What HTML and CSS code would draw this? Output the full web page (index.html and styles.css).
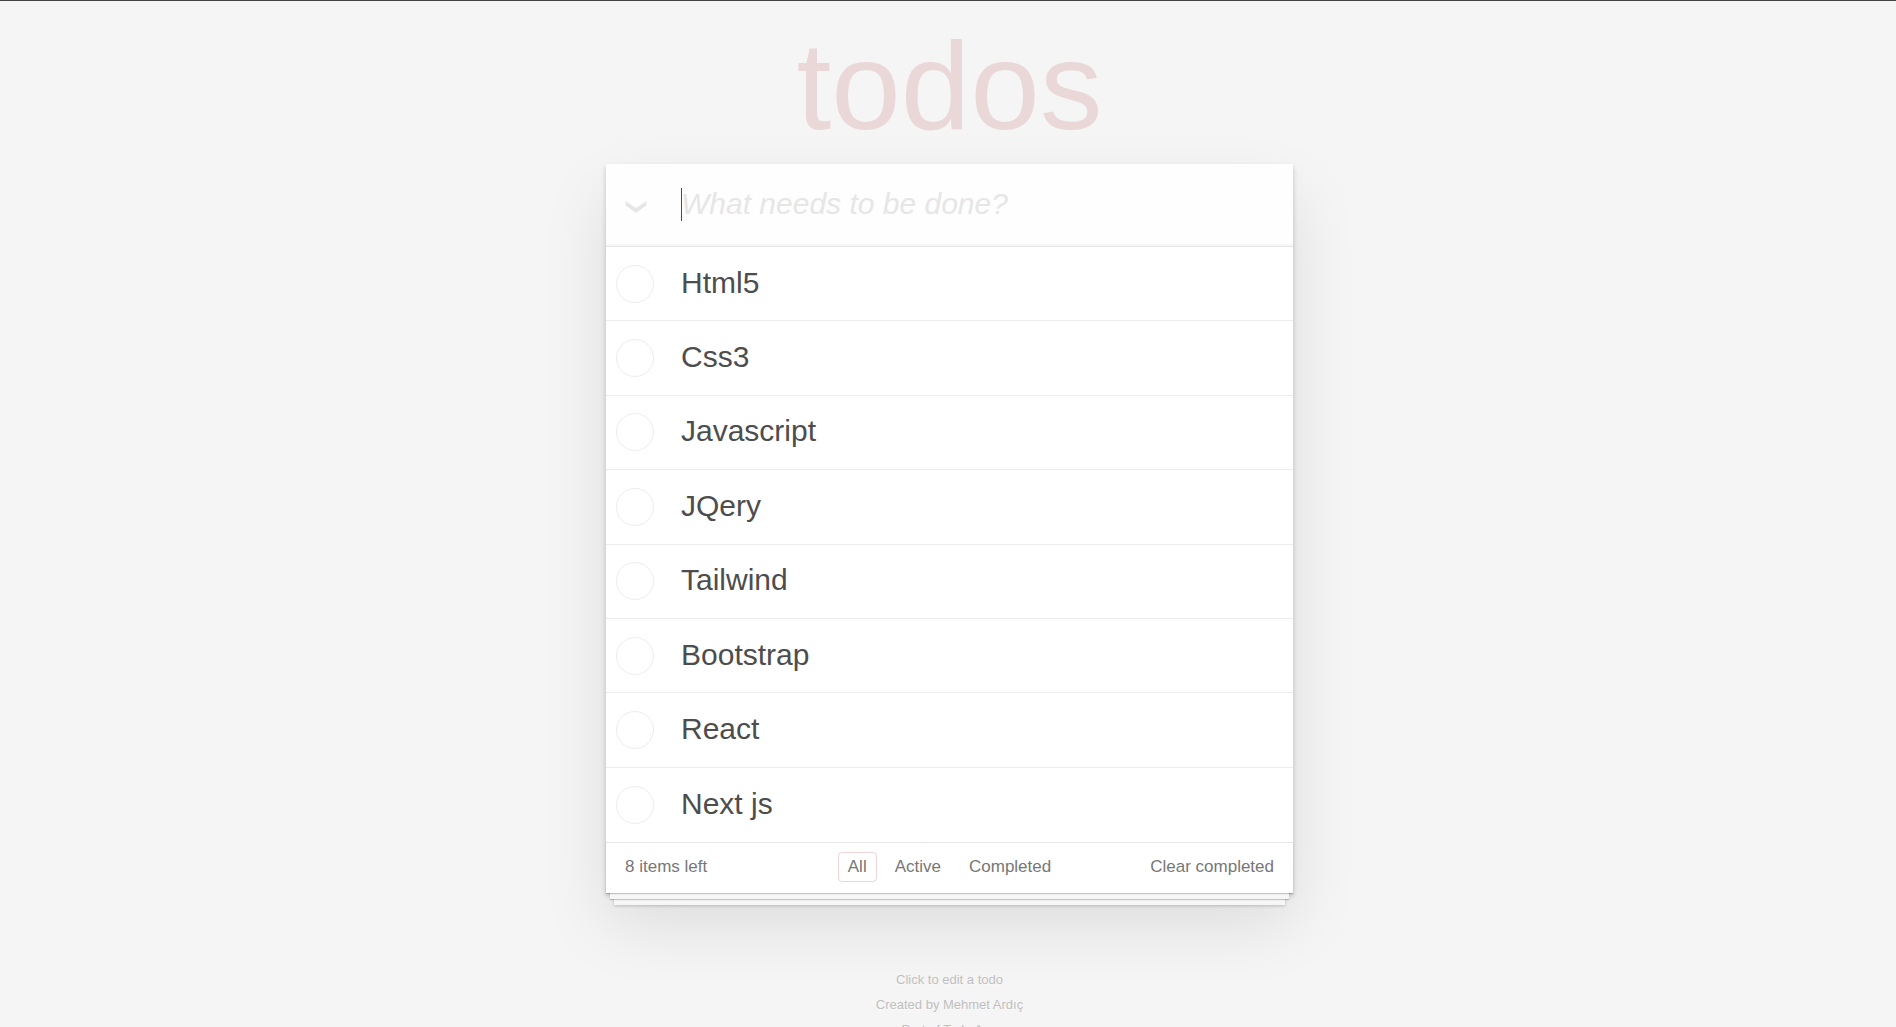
FILE: index.html
```
<!DOCTYPE html>
<html lang="en">
<head>
<meta charset="utf-8">
<meta name="viewport" content="width=device-width, initial-scale=1">
<title>todos</title>
<link rel="stylesheet" href="styles.css">
</head>
<body>
<main class="page">
  <h1 class="title">todos</h1>
  <section class="card">
    <header class="entry">
      <button class="toggle-all" type="button" aria-label="Mark all as complete">
        <svg class="chevron" viewBox="0 0 22 14" aria-hidden="true"><path d="M0.500 1 Q2 2.200 11 8 Q20 2.200 21.500 1 V5.200 Q20 6.500 11 13 Q2 6.500 0.500 5.200 Z"/></svg>
      </button>
      <div class="field">
        <input class="new-todo" type="text" placeholder="What needs to be done?" aria-label="New todo">
      </div>
    </header>
    <ul class="list">
      <li class="item"><input class="check" type="checkbox" id="t1"><label class="label" for="t1">Html5</label></li>
      <li class="item"><input class="check" type="checkbox" id="t2"><label class="label" for="t2">Css3</label></li>
      <li class="item"><input class="check" type="checkbox" id="t3"><label class="label" for="t3">Javascript</label></li>
      <li class="item"><input class="check" type="checkbox" id="t4"><label class="label" for="t4">JQery</label></li>
      <li class="item"><input class="check" type="checkbox" id="t5"><label class="label" for="t5">Tailwind</label></li>
      <li class="item"><input class="check" type="checkbox" id="t6"><label class="label" for="t6">Bootstrap</label></li>
      <li class="item"><input class="check" type="checkbox" id="t7"><label class="label" for="t7">React</label></li>
      <li class="item"><input class="check" type="checkbox" id="t8"><label class="label" for="t8">Next js</label></li>
    </ul>
    <footer class="bar">
      <span class="count">8 items left</span>
      <nav class="filters">
        <a class="filter selected" href="#all">All</a>
        <a class="filter" href="#active">Active</a>
        <a class="filter" href="#completed">Completed</a>
      </nav>
      <button class="clear" type="button">Clear completed</button>
    </footer>
  </section>
  <footer class="info">
    <p>Click to edit a todo</p>
    <p>Created by <a href="#author">Mehmet Ardıç</a></p>
    <p>Part of <a href="#app">Todo App</a></p>
  </footer>
</main>
</body>
</html>
```
FILE: styles.css
```
* {
  box-sizing: border-box;
}

body {
  margin: 0;
  border-top: 1px solid #444;
  background: #f5f5f5;
  color: #4d4d4d;
  font-family: "Liberation Sans", Arial, sans-serif;
}

a {
  color: inherit;
  text-decoration: none;
}

button {
  margin: 0;
  padding: 0;
  border: 0;
  background: none;
  color: inherit;
  font: inherit;
  cursor: pointer;
}

.page {
  display: flex;
  flex-direction: column;
  align-items: center;
  padding-left: 3px;
}

.title {
  margin: 0;
  padding: 15px 0 8px;
  color: rgba(175, 47, 47, 0.15);
  font-size: 125px;
  font-weight: 400;
  line-height: 140px;
}

.card {
  width: 100%;
  max-width: 687px;
  background: #fff;
  box-shadow: 0 3px 5px rgba(0, 0, 0, 0.2), 0 31px 63px rgba(0, 0, 0, 0.1);
}

.entry {
  display: flex;
  height: 82px;
  background: #fefefe;
  box-shadow: inset 0 -2px 1px rgba(0, 0, 0, 0.03);
}

.toggle-all {
  display: flex;
  justify-content: flex-end;
  align-items: center;
  width: 75px;
  padding: 3px 34px 0 0;
}

.chevron {
  width: 22px;
  height: 14px;
  fill: #e6e6e6;
}

.field {
  position: relative;
  flex: 1;
  display: flex;
}

.field::before {
  content: "";
  position: absolute;
  top: 24px;
  left: 0;
  width: 1px;
  height: 33px;
  background: #4d4d4d;
}

.new-todo {
  width: 100%;
  padding: 0 20px 2px 0;
  border: 0;
  outline: 0;
  background: none;
  color: inherit;
  font: 30px "Liberation Sans", Arial, sans-serif;
}

.new-todo::placeholder {
  color: #e6e6e6;
  font-style: italic;
}

.list {
  display: grid;
  grid-auto-rows: 1fr;
  min-height: 596px;
  margin: 0;
  padding: 0;
  border-top: 1px solid #e6e6e6;
  list-style: none;
}

.item {
  display: flex;
  align-items: center;
  gap: 27px;
  padding: 0 20px 0 10px;
  border-bottom: 1px solid #ededed;
}

.item:last-child {
  border-bottom: 0;
}

.check {
  appearance: none;
  width: 38px;
  height: 38px;
  margin: 0;
  border: 1px solid #ededed;
  border-radius: 50%;
}

.check:checked {
  border-color: #bddad5;
}

.label {
  padding-bottom: 2px;
  font-size: 30px;
  line-height: 36px;
}

.bar {
  display: grid;
  grid-template-columns: 1fr auto 1fr;
  align-items: center;
  min-height: 51px;
  padding: 0 19px 2px;
  border-top: 1px solid #e6e6e6;
  color: #777;
  font-size: 17px;
  line-height: 22px;
  box-shadow: 0 1px 1px rgba(0, 0, 0, 0.2), 0 10px 0 -4px #f6f6f6,
    0 11px 1px -4px rgba(0, 0, 0, 0.2), 0 20px 0 -8px #f6f6f6,
    0 21px 3px -8px rgba(0, 0, 0, 0.2);
}

.filters {
  display: flex;
  gap: 8px;
}

.filter {
  padding: 3px 9px;
  border: 1px solid transparent;
  border-radius: 4px;
}

.selected {
  border-color: rgba(175, 47, 47, 0.2);
}

.clear {
  justify-self: end;
}

.info {
  padding-top: 74px;
  color: #bfbfbf;
  font-size: 13px;
  line-height: 25px;
  text-align: center;
  text-shadow: 0 1px 0 rgba(255, 255, 255, 0.5);
}

.info p {
  margin: 0;
}
```
